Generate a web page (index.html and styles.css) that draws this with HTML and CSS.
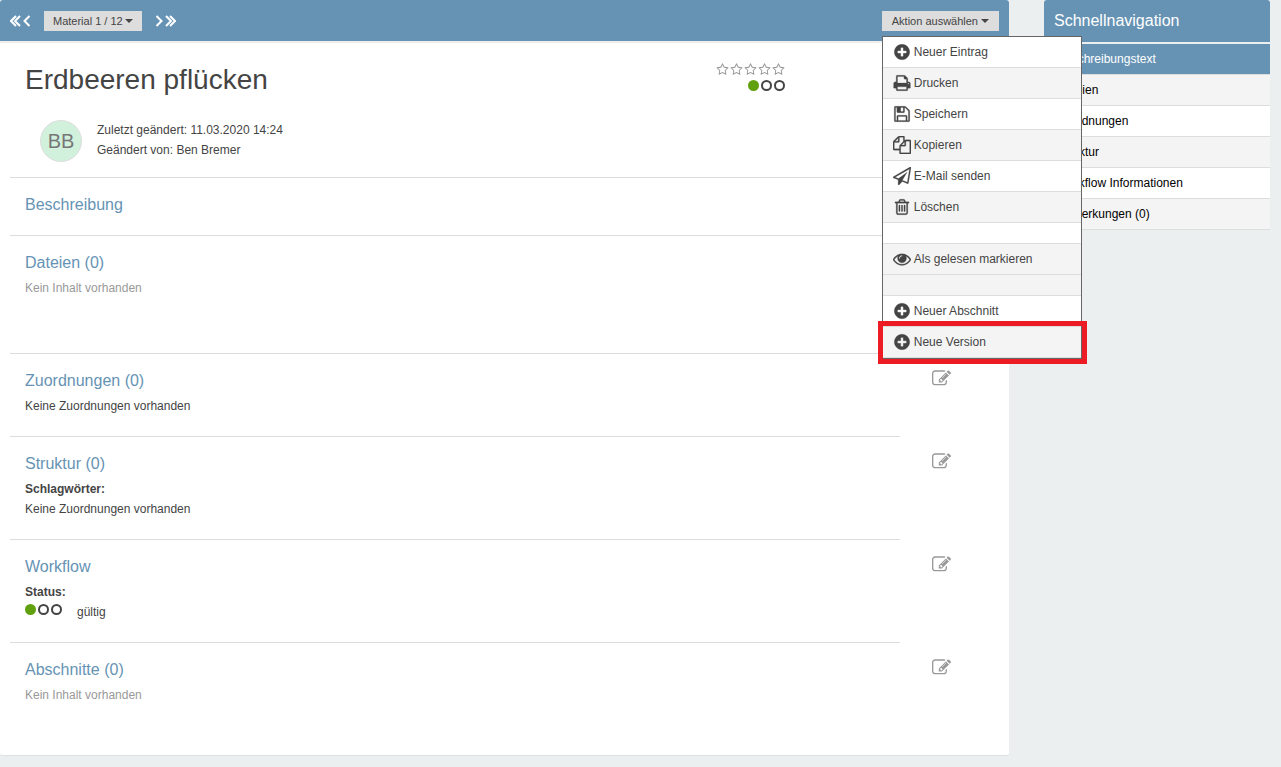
FILE: index.html
```html
<!DOCTYPE html>
<html lang="de">
<head>
<meta charset="utf-8">
<title>Erdbeeren pflücken</title>
<link rel="stylesheet" href="styles.css">
</head>
<body>
<svg class="sprite" aria-hidden="true">
  <symbol id="plus" viewBox="0 0 1792 1792"><path d="M1344 960v-128q0-26-19-45t-45-19h-256v-256q0-26-19-45t-45-19h-128q-26 0-45 19t-19 45v256h-256q-26 0-45 19t-19 45v128q0 26 19 45t45 19h256v256q0 26 19 45t45 19h128q26 0 45-19t19-45v-256h256q26 0 45-19t19-45zm320-64q0 209-103 385.500t-279.500 279.500-385.500 103-385.500-103-279.500-279.500-103-385.500 103-385.500 279.500-279.500 385.500-103 385.500 103 279.500 279.500 103 385.500z"/></symbol>
  <symbol id="print" viewBox="0 0 1792 1792"><path d="M448 1536h896v-256h-896v256zm0-640h896v-384h-160q-40 0-68-28t-28-68v-160h-640v640zm1152 64q0-26-19-45t-45-19-45 19-19 45 19 45 45 19 45-19 19-45zm128 0v416q0 13-9.500 22.500t-22.500 9.500h-224v160q0 40-28 68t-68 28h-960q-40 0-68-28t-28-68v-160h-224q-13 0-22.500-9.500t-9.500-22.500v-416q0-79 56.500-135.500t135.500-56.500h64v-544q0-40 28-68t68-28h672q40 0 88 20t76 48l152 152q28 28 48 76t20 88v256h64q79 0 135.500 56.500t56.500 135.500z"/></symbol>
  <symbol id="save" viewBox="0 0 1792 1792"><path d="M512 1536h768v-384h-768v384zm896 0h128v-896q0-14-10-38.500t-20-34.500l-281-281q-10-10-34-20t-39-10v416q0 40-28 68t-68 28h-576q-40 0-68-28t-28-68v-416h-128v1280h128v-416q0-40 28-68t68-28h832q40 0 68 28t28 68v416zm-384-928v-320q0-13-9.500-22.500t-22.500-9.500h-192q-13 0-22.500 9.500t-9.500 22.500v320q0 13 9.500 22.500t22.500 9.500h192q13 0 22.500-9.500t9.500-22.500zm640 32v928q0 40-28 68t-68 28h-1344q-40 0-68-28t-28-68v-1344q0-40 28-68t68-28h928q40 0 88 20t76 48l280 280q28 28 48 76t20 88z"/></symbol>
  <symbol id="copy" viewBox="0 0 1792 1792"><path d="M1696 384q40 0 68 28t28 68v1216q0 40-28 68t-68 28h-960q-40 0-68-28t-28-68v-288h-544q-40 0-68-28t-28-68v-672q0-40 20-88t48-76l408-408q28-28 76-48t88-20h416q40 0 68 28t28 68v328q68-40 128-40h416zm-544 213l-299 299h299v-299zm-640-384l-299 299h299v-299zm196 647l316-316v-416h-384v416q0 40-28 68t-68 28h-416v640h512v-256q0-40 20-88t48-76zm956 804v-1152h-384v416q0 40-28 68t-68 28h-416v640h896z"/></symbol>
  <symbol id="send" viewBox="0 0 1792 1792"><path d="M1764 11q33 24 27 64l-256 1536q-5 29-32 45-14 8-31 8-11 0-24-5l-527-215-298 327q-18 21-47 21-14 0-23-4-19-7-30-23.500t-11-36.500v-452l-472-193q-37-14-40-55-3-39 32-59l1664-960q35-21 68 2zm-342 1499l221-1323-1434 827 336 137 863-639-478 797z"/></symbol>
  <symbol id="trash" viewBox="0 0 1792 1792"><path d="M704 736v576q0 14-9 23t-23 9h-64q-14 0-23-9t-9-23v-576q0-14 9-23t23-9h64q14 0 23 9t9 23zm256 0v576q0 14-9 23t-23 9h-64q-14 0-23-9t-9-23v-576q0-14 9-23t23-9h64q14 0 23 9t9 23zm256 0v576q0 14-9 23t-23 9h-64q-14 0-23-9t-9-23v-576q0-14 9-23t23-9h64q14 0 23 9t9 23zm128 724v-948h-896v948q0 22 7 40.500t14.500 27 10.500 8.500h832q3 0 10.500-8.500t14.500-27 7-40.500zm-672-1076h448l-48-117q-7-9-17-11h-317q-10 2-17 11zm928 32v64q0 14-9 23t-23 9h-96v948q0 83-47 143.500t-113 60.500h-832q-66 0-113-58.500t-47-141.500v-952h-96q-14 0-23-9t-9-23v-64q0-14 9-23t23-9h309l70-167q15-37 54-63t79-26h320q40 0 79 26t54 63l70 167h309q14 0 23 9t9 23z"/></symbol>
  <symbol id="eye" viewBox="0 0 1792 1792"><path d="M1664 960q-152-236-381-353 61 104 61 225 0 185-131.500 316.500t-316.500 131.500-316.500-131.500-131.500-316.500q0-121 61-225-229 117-381 353 133 205 333.500 326.500t434.500 121.500 434.500-121.500 333.500-326.500zm-720-384q0-20-14-34t-34-14q-125 0-214.500 89.500t-89.500 214.500q0 20 14 34t34 14 34-14 14-34q0-86 61-147t147-61q20 0 34-14t14-34zm848 384q0 34-20 69-140 230-376.500 368.500t-499.500 138.500-499.500-139-376.500-368q-20-35-20-69t20-69q140-229 376.500-368t499.500-139 499.500 139 376.500 368q20 35 20 69z"/></symbol>
  <symbol id="edit" viewBox="0 0 1792 1792"><path d="M888 1184l116-116-152-152-116 116v56h96v96h56zm440-720q-16-16-33 1l-350 350q-17 17-1 33t33-1l350-350q17-17 1-33zm80 594v190q0 119-84.500 203.500t-203.500 84.500h-832q-119 0-203.500-84.500t-84.500-203.500v-832q0-119 84.500-203.500t203.500-84.500h832q63 0 117 25 15 7 18 23 3 17-9 29l-49 49q-14 14-32 8-23-6-45-6h-832q-66 0-113 47t-47 113v832q0 66 47 113t113 47h832q66 0 113-47t47-113v-126q0-13 9-22l64-64q15-15 35-7t20 29zm-96-738l288 288-672 672h-288v-288zm444 132l-92 92-288-288 92-92q28-28 68-28t68 28l152 152q28 28 28 68t-28 68z"/></symbol>
  <symbol id="star" viewBox="0 0 1792 1792"><path d="M1201 1004l306-297-422-62-189-382-189 382-422 62 306 297-73 421 378-199 377 199zm527-357q0 22-26 48l-363 354 86 500q1 7 1 20 0 50-41 50-19 0-40-12l-449-236-449 236q-22 12-40 12-21 0-31.500-14.500t-10.500-35.500q0-6 2-20l86-500-364-354q-25-27-25-48 0-37 56-46l502-73 225-455q19-41 49-41t49 41l225 455 502 73q56 9 56 46z"/></symbol>
  <symbol id="prev" viewBox="0 0 8 12"><path class="chev" d="M6.500 1L1.500 6l5 5"/></symbol>
  <symbol id="next" viewBox="0 0 8 12"><path class="chev" d="M1.500 1L6.500 6l-5 5"/></symbol>
  <symbol id="first" viewBox="0 0 12 12"><path class="chev" d="M6 1L1 6l5 5M10 1L5 6l5 5"/></symbol>
  <symbol id="last" viewBox="0 0 12 12"><path class="chev" d="M2 1l5 5-5 5M6 1l5 5-5 5"/></symbol>
</svg>

<div class="page">
  <main class="card">
    <header class="bar">
      <nav class="pager" aria-label="Material">
        <a href="#" aria-label="Erstes"><svg class="double"><use href="#first"/></svg></a>
        <a href="#" aria-label="Zurück"><svg class="single"><use href="#prev"/></svg></a>
        <button class="drop drop-pager" type="button">Material 1 / 12<span class="caret"></span></button>
        <a href="#" aria-label="Weiter"><svg class="single"><use href="#next"/></svg></a>
        <a href="#" aria-label="Letztes"><svg class="double"><use href="#last"/></svg></a>
      </nav>
      <div class="actions">
        <button class="drop" type="button" aria-expanded="true">Aktion auswählen<span class="caret"></span></button>
        <ul class="menu">
          <li><a href="#"><svg><use href="#plus"/></svg>Neuer Eintrag</a></li>
          <li class="shaded"><a href="#"><svg><use href="#print"/></svg>Drucken</a></li>
          <li><a href="#"><svg><use href="#save"/></svg>Speichern</a></li>
          <li class="shaded"><a href="#"><svg><use href="#copy"/></svg>Kopieren</a></li>
          <li><a href="#"><svg><use href="#send"/></svg>E-Mail senden</a></li>
          <li class="shaded"><a href="#"><svg><use href="#trash"/></svg>Löschen</a></li>
          <li></li>
          <li class="shaded"><a href="#"><svg><use href="#eye"/></svg>Als gelesen markieren</a></li>
          <li class="shaded"></li>
          <li><a href="#"><svg><use href="#plus"/></svg>Neuer Abschnitt</a></li>
          <li class="shaded marked"><a href="#"><svg><use href="#plus"/></svg>Neue Version</a></li>
        </ul>
      </div>
    </header>

    <div class="hero">
      <div class="hero-top">
        <h1>Erdbeeren pflücken</h1>
        <div class="rating">
          <div class="stars"><svg><use href="#star"/></svg><svg><use href="#star"/></svg><svg><use href="#star"/></svg><svg><use href="#star"/></svg><svg><use href="#star"/></svg></div>
          <div class="dots"><i class="on"></i><i></i><i></i></div>
        </div>
      </div>
      <div class="author">
        <span class="avatar">BB</span>
        <p>Zuletzt geändert: 11.03.2020 14:24<br>Geändert von: Ben Bremer</p>
      </div>
    </div>

    <section class="block wide intro">
      <div class="body"><h2>Beschreibung</h2></div>
    </section>
    <section class="block wide files">
      <div class="body"><h2>Dateien (0)</h2><p class="muted">Kein Inhalt vorhanden</p></div>
    </section>
    <section class="block">
      <div class="body"><h2>Zuordnungen (0)</h2><p>Keine Zuordnungen vorhanden</p></div>
      <a class="edit" href="#" aria-label="Zuordnungen bearbeiten"><svg><use href="#edit"/></svg></a>
    </section>
    <section class="block">
      <div class="body"><h2>Struktur (0)</h2><p><strong>Schlagwörter:</strong></p><p>Keine Zuordnungen vorhanden</p></div>
      <a class="edit" href="#" aria-label="Struktur bearbeiten"><svg><use href="#edit"/></svg></a>
    </section>
    <section class="block">
      <div class="body"><h2>Workflow</h2><p><strong>Status:</strong></p>
        <div class="status"><div class="dots"><i class="on"></i><i></i><i></i></div><span>gültig</span></div></div>
      <a class="edit" href="#" aria-label="Workflow bearbeiten"><svg><use href="#edit"/></svg></a>
    </section>
    <section class="block last">
      <div class="body"><h2>Abschnitte (0)</h2><p class="muted">Kein Inhalt vorhanden</p></div>
      <a class="edit" href="#" aria-label="Abschnitte bearbeiten"><svg><use href="#edit"/></svg></a>
    </section>
  </main>

  <aside class="side">
    <h2>Schnellnavigation</h2>
    <ul>
      <li class="active"><a href="#">Beschreibungstext</a></li>
      <li><a href="#">Dateien</a></li>
      <li><a href="#">Zuordnungen</a></li>
      <li><a href="#">Struktur</a></li>
      <li><a href="#">Workflow Informationen</a></li>
      <li><a href="#">Bemerkungen (0)</a></li>
    </ul>
  </aside>
</div>
</body>
</html>
```
FILE: styles.css
```css
* { box-sizing: border-box; }
body {
  margin: 0;
  background: #ebeff0;
  color: #444;
  font: 12px/20px "Liberation Sans", Arial, sans-serif;
}
h1, h2, p, ul { margin: 0; padding: 0; font-weight: normal; }
ul { list-style: none; }
a { color: inherit; text-decoration: none; }
svg { display: block; fill: currentColor; }
.sprite { position: absolute; width: 0; height: 0; }
.chev { fill: none; stroke: currentColor; stroke-width: 2; }

.page {
  display: flex;
  align-items: flex-start;
  gap: 35px;
  padding: 0 11px 11px 0;
}
.card {
  flex: 1;
  min-width: 0;
  background: #fff;
  border-bottom: 1px solid #dde1e2;
  border-radius: 3px;
}

.bar {
  display: flex;
  justify-content: space-between;
  align-items: center;
  height: 43px;
  padding: 0 10px;
  background: #6693b4;
  border-bottom: 2px solid #eee;
  border-radius: 3px 3px 0 0;
}
.pager { display: flex; align-items: center; gap: 1px; color: #fff; }
.double { width: 12px; height: 12px; }
.single { width: 8px; height: 12px; }
.drop {
  display: flex;
  align-items: center;
  gap: 3px;
  height: 20px;
  padding: 0 10px;
  border: 0;
  background: #ddd;
  color: #444;
  font: 11px/20px "Liberation Sans", Arial, sans-serif;
}
.drop-pager { margin: 0 12px; padding: 0 9px; gap: 2px; }
.caret {
  border: 4px solid transparent;
  border-top-color: #444;
  border-bottom: 0;
}
.actions { position: relative; }

.menu {
  position: absolute;
  z-index: 5;
  top: 25px;
  left: 0;
  width: 200px;
  background: #fff;
  border: 1px solid #666;
  border-bottom-width: 2px;
}
.menu li { min-height: 21px; border-bottom: 1px solid #ddd; }
.menu .shaded { background: #f4f4f4; }
.menu a { display: flex; align-items: center; gap: 3px; height: 30px; padding: 0 10px; }
.menu svg { width: 18px; height: 18px; stroke: currentColor; stroke-width: 24px; }
.marked { position: relative; }
.marked::after {
  content: "";
  position: absolute;
  inset: -6px -6px -7px -5px;
  border: 5px solid #ed1c24;
}

.hero { padding: 20px 0 15px 25px; }
.hero-top {
  display: grid;
  grid-template-columns: 1fr auto;
  margin-bottom: 23px;
  padding-right: 224px;
}
h1 { font-size: 28px; line-height: 34px; }
.rating { display: flex; flex-direction: column; align-items: flex-end; gap: 4px; }
.stars { display: flex; gap: 1px; color: #999; }
.stars svg { width: 13px; height: 13px; }
.dots { display: flex; gap: 2px; }
.dots i { width: 11px; height: 11px; border: 2px solid #444; border-radius: 50%; }
.dots .on { border-color: #61a00f; background: #61a00f; }
.author { display: flex; gap: 15px; padding-left: 15px; }
.avatar {
  width: 42px;
  height: 42px;
  border: 1px solid #ddd;
  border-radius: 50%;
  background: #d1f1dd;
  color: #777;
  font-size: 20px;
  line-height: 40px;
  text-align: center;
}

.block { display: grid; grid-template-columns: 1fr 77px; column-gap: 32px; padding-left: 10px; }
.body { padding: 17px 15px 20px; border-bottom: 1px solid #ddd; }
.body h2 { margin-bottom: 5px; color: #6693b4; font-size: 16px; line-height: 20px; }
.wide { grid-template-columns: 1fr; padding-right: 10px; }
.intro .body { border-top: 1px solid #ddd; padding-bottom: 15px; }
.files .body { padding-bottom: 55px; }
.last .body { padding-bottom: 50px; border-bottom: 0; }
.muted { color: #999; }
.edit { align-self: start; margin-top: 15px; color: #999; }
.edit svg { width: 19px; height: 19px; }
.status { display: flex; gap: 15px; }
.status .dots { padding-top: 2px; }

.side { flex: 0 0 226px; }
.side h2 {
  margin-bottom: 2px;
  padding: 0 10px;
  border-radius: 3px 3px 0 0;
  background: #6693b4;
  color: #fff;
  font-size: 16px;
  line-height: 42px;
}
.side li { border-bottom: 1px solid #ddd; background: #fff; color: #000; }
.side li:nth-child(even) { background: #f4f4f4; }
.side .active { background: #6693b4; color: #fff; }
.side a { display: block; padding: 0 13px; line-height: 30px; }
```
